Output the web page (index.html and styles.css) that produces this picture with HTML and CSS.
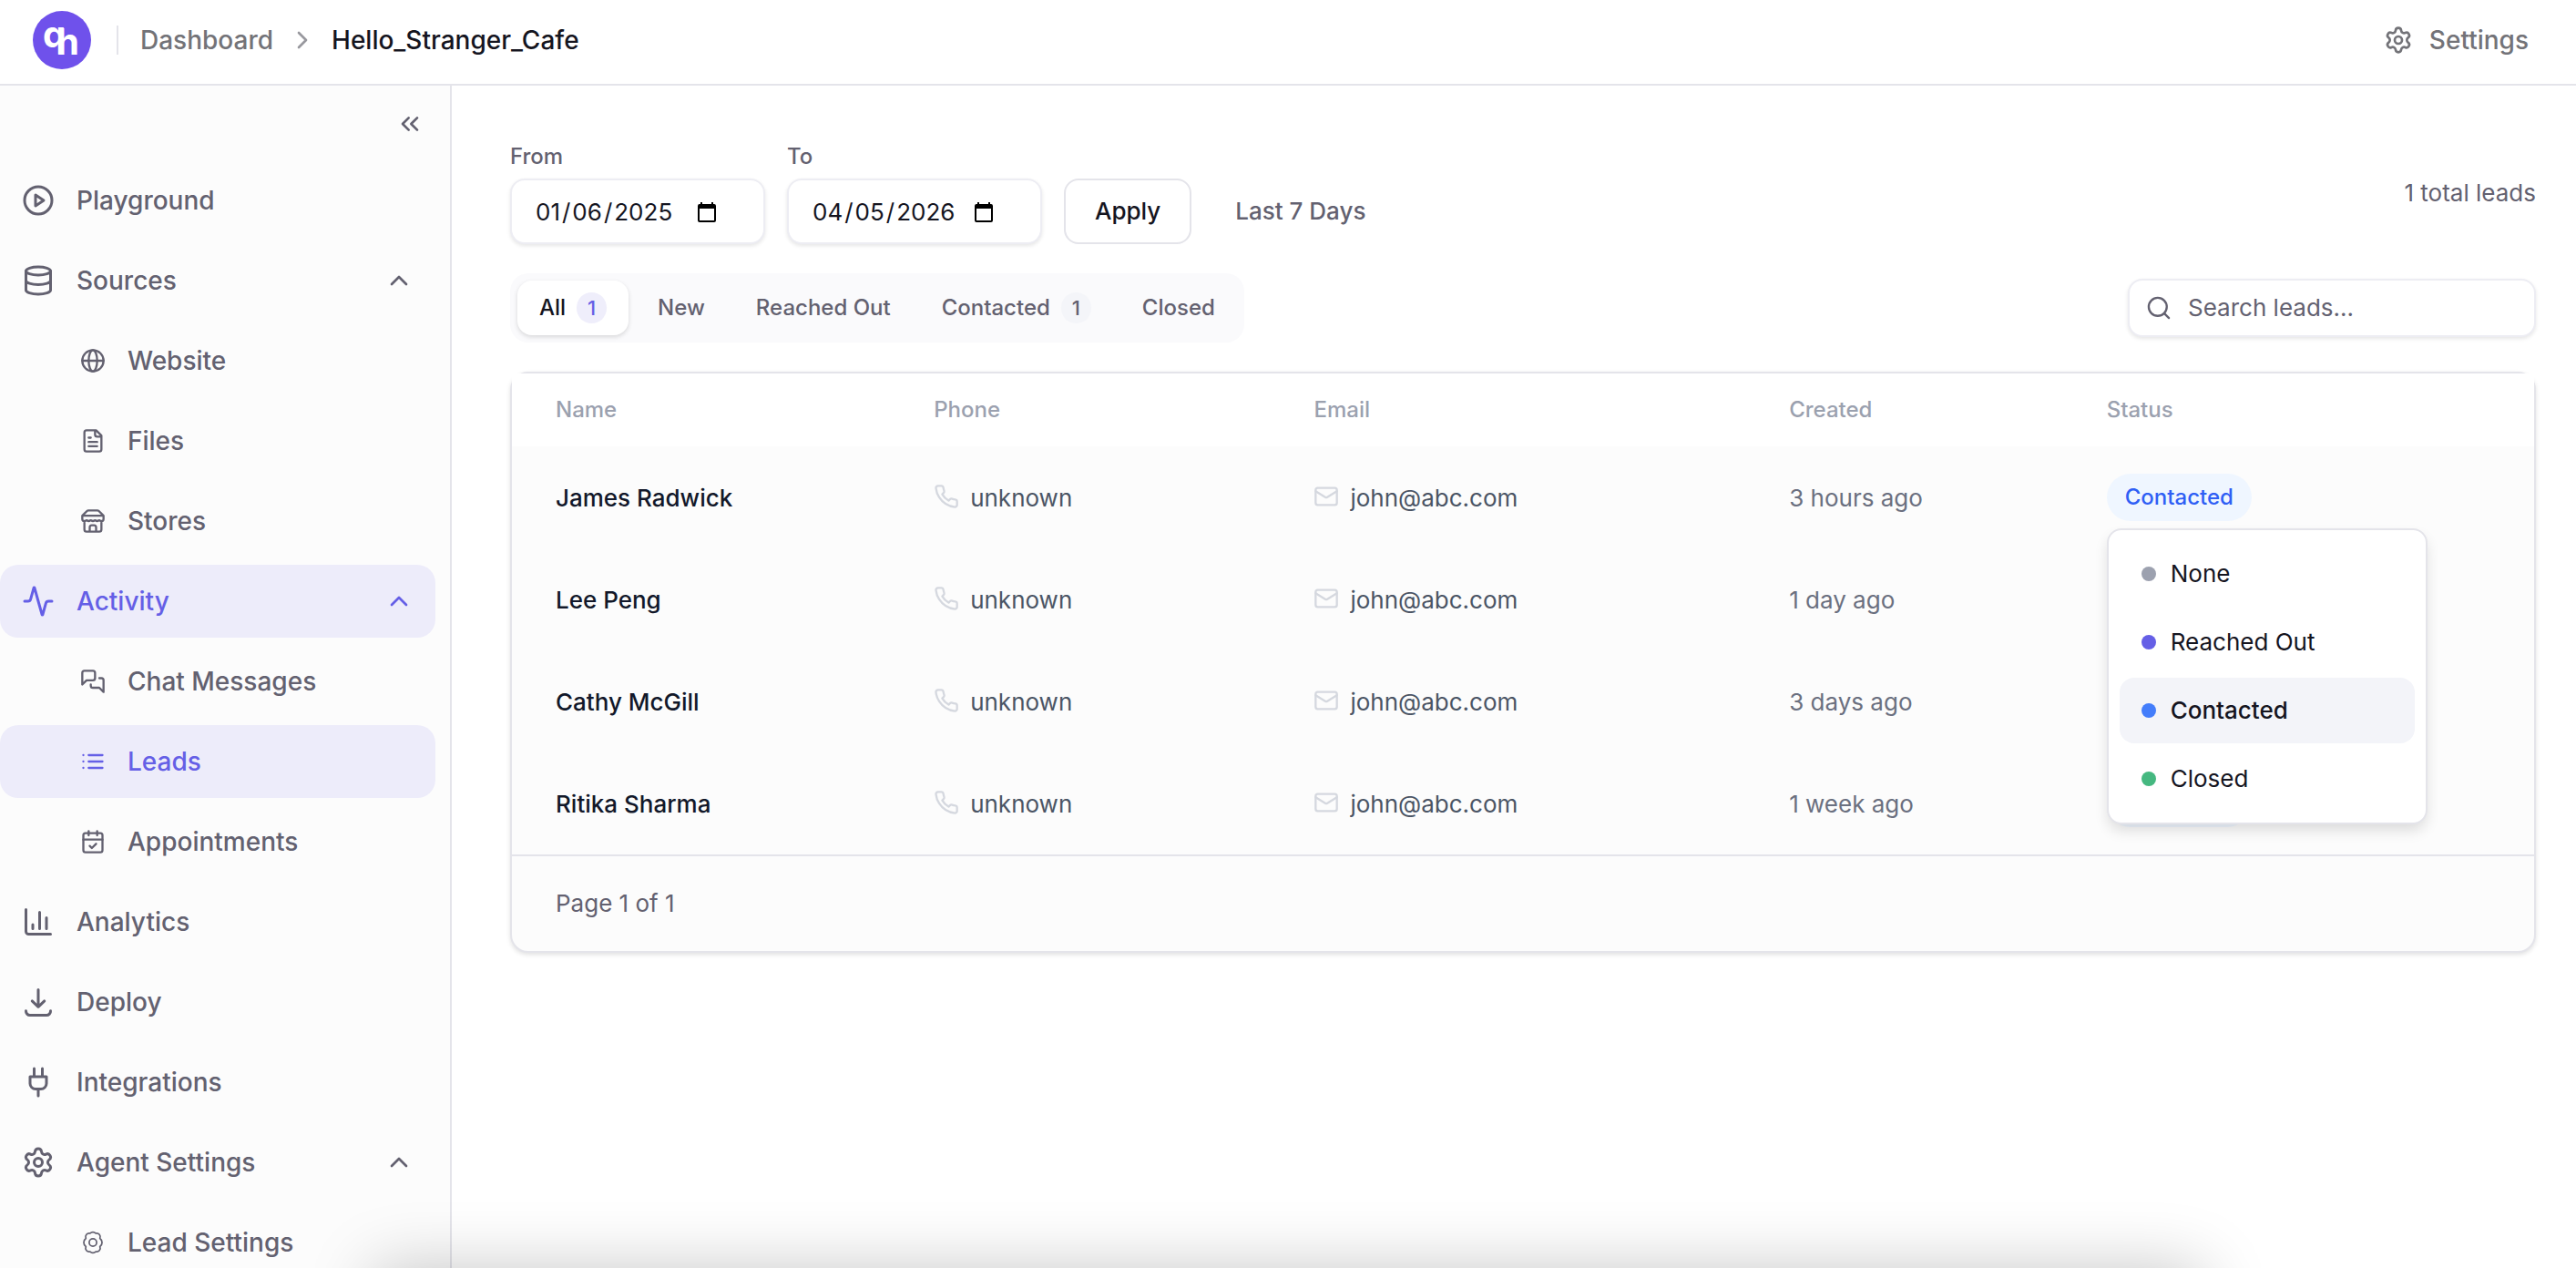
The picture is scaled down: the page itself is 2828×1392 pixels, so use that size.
FILE: index.html
```html
<!DOCTYPE html>
<html lang="en-US">
<head>
<meta charset="utf-8">
<meta name="viewport" content="width=device-width, initial-scale=1">
<title>Leads</title>
<link rel="stylesheet" href="styles.css">
</head>
<body>
<svg class="sprite" aria-hidden="true">
  <symbol id="i-play" viewBox="0 0 24 24"><circle cx="12" cy="12" r="10"/><path d="M10 8l6 4-6 4z"/></symbol>
  <symbol id="i-database" viewBox="0 0 24 24"><ellipse cx="12" cy="5" rx="9" ry="3"/><path d="M3 5v14a9 3 0 0 0 18 0V5M3 12a9 3 0 0 0 18 0"/></symbol>
  <symbol id="i-globe" viewBox="0 0 24 24"><circle cx="12" cy="12" r="10"/><path d="M2 12h20"/><ellipse cx="12" cy="12" rx="4" ry="10"/></symbol>
  <symbol id="i-file" viewBox="0 0 24 24"><path d="M15 2H6a2 2 0 0 0-2 2v16a2 2 0 0 0 2 2h12a2 2 0 0 0 2-2V7zM14 2v4a2 2 0 0 0 2 2h4M10 9H8M16 13H8M16 17H8"/></symbol>
  <symbol id="i-store" viewBox="0 0 24 24"><path d="M2 7l4.400-4.400A2 2 0 0 1 7.800 2h8.400a2 2 0 0 1 1.400.6L22 7v3a2 2 0 0 1-2 2 2.700 2.700 0 0 1-1.600-.6.7.7 0 0 0-.8 0 2.700 2.700 0 0 1-3.200 0 .7.7 0 0 0-.8 0 2.700 2.700 0 0 1-3.200 0 .7.7 0 0 0-.8 0 2.700 2.700 0 0 1-3.200 0 .7.7 0 0 0-.8 0A2.700 2.700 0 0 1 4 12a2 2 0 0 1-2-2zM2 7h20M4 12v8a2 2 0 0 0 2 2h12a2 2 0 0 0 2-2v-8M15 22v-4a2 2 0 0 0-2-2h-2a2 2 0 0 0-2 2v4"/></symbol>
  <symbol id="i-activity" viewBox="0 0 24 24"><path d="M22 12h-2.480a2 2 0 0 0-1.930 1.460l-2.350 8.360a.25.25 0 0 1-.48 0L9.240 2.180a.25.25 0 0 0-.48 0l-2.350 8.360A2 2 0 0 1 4.490 12H2"/></symbol>
  <symbol id="i-chat" viewBox="0 0 24 24"><path d="M14 9a2 2 0 0 1-2 2H6l-4 4V4a2 2 0 0 1 2-2h8a2 2 0 0 1 2 2zM18 9h2a2 2 0 0 1 2 2v11l-4-4h-6a2 2 0 0 1-2-2v-1"/></symbol>
  <symbol id="i-list" viewBox="0 0 24 24"><path d="M8 6h13M8 12h13M8 18h13M3 6h.01M3 12h.01M3 18h.01"/></symbol>
  <symbol id="i-calendar" viewBox="0 0 24 24"><rect x="3" y="4" width="18" height="18" rx="2"/><path d="M8 2v4M16 2v4M3 10h18M9 16l2 2 4-4"/></symbol>
  <symbol id="i-chart" viewBox="0 0 24 24"><path d="M3 3v16a2 2 0 0 0 2 2h16M18 17V9M13 17V5M8 17v-3"/></symbol>
  <symbol id="i-download" viewBox="0 0 24 24"><path d="M12 3v12.500M7.500 11.300l4.500 4.300 4.500-4.300M3 18.500a3 3 0 0 0 3 3.200h12a3 3 0 0 0 3-3.200"/></symbol>
  <symbol id="i-plug" viewBox="0 0 24 24"><path d="M12 22v-5M9 8V2M15 8V2M18 8v5a4 4 0 0 1-4 4h-4a4 4 0 0 1-4-4V8z"/></symbol>
  <symbol id="i-gear" viewBox="0 0 24 24"><path d="M9.671 4.136a2.340 2.340 0 0 1 4.659 0 2.340 2.340 0 0 0 3.319 1.915 2.340 2.340 0 0 1 2.330 4.033 2.340 2.340 0 0 0 0 3.831 2.340 2.340 0 0 1-2.330 4.033 2.340 2.340 0 0 0-3.319 1.915 2.340 2.340 0 0 1-4.659 0 2.340 2.340 0 0 0-3.320-1.915 2.340 2.340 0 0 1-2.330-4.033 2.340 2.340 0 0 0 0-3.831A2.340 2.340 0 0 1 6.350 6.051a2.340 2.340 0 0 0 3.319-1.915"/><circle cx="12" cy="12" r="3"/></symbol>
  <symbol id="i-cog" viewBox="0 0 24 24"><path d="M9.300 3.400a3.600 3.600 0 0 1 5.400 0a3.400 3.400 0 0 1 3.900 4.700a4.800 4.800 0 0 1 0 7.800a3.400 3.400 0 0 1-3.900 4.700a3.600 3.600 0 0 1-5.400 0a3.400 3.400 0 0 1-3.900-4.700a4.800 4.800 0 0 1 0-7.800a3.400 3.400 0 0 1 3.900-4.700z"/><circle cx="12" cy="12" r="3.500"/></symbol>
  <symbol id="i-up" viewBox="0 0 24 24"><path d="M18 15l-6-6-6 6"/></symbol>
  <symbol id="i-right" viewBox="0 0 24 24"><path d="M9 18l6-6-6-6"/></symbol>
  <symbol id="i-collapse" viewBox="0 0 24 24"><path d="M11 17l-5-5 5-5M18 17l-5-5 5-5"/></symbol>
  <symbol id="i-search" viewBox="0 0 24 24"><circle cx="11" cy="11" r="8.500"/><path d="M21.500 21.500l-4.300-4.300"/></symbol>
  <symbol id="i-phone" viewBox="0 0 24 24"><path d="M22 16.920v3a2 2 0 0 1-2.180 2 19.790 19.790 0 0 1-8.630-3.070 19.500 19.500 0 0 1-6-6 19.790 19.790 0 0 1-3.070-8.670A2 2 0 0 1 4.110 2h3a2 2 0 0 1 2 1.720 12.840 12.840 0 0 0 .7 2.810 2 2 0 0 1-.45 2.110L8.090 9.910a16 16 0 0 0 6 6l1.270-1.270a2 2 0 0 1 2.110-.45 12.840 12.840 0 0 0 2.810.7A2 2 0 0 1 22 16.920z"/></symbol>
  <symbol id="i-mail" viewBox="0 0 24 24"><rect x="2" y="4" width="20" height="16" rx="2"/><path d="M22 7l-8.970 5.700a1.940 1.940 0 0 1-2.060 0L2 7"/></symbol>
</svg>

<header class="topbar">
  <a class="logo" href="#" aria-label="Home">
    <svg viewBox="0 0 64 64"><circle cx="32" cy="32" r="32"/><text x="11" y="40">q</text><text x="26" y="48">h</text></svg>
  </a>
  <span class="topbar-divider"></span>
  <nav class="crumbs" aria-label="Breadcrumb">
    <a href="#">Dashboard</a>
    <svg class="icon icon-md"><use href="#i-right"/></svg>
    <a class="current" href="#">Hello_Stranger_Cafe</a>
  </nav>
  <a class="topbar-settings" href="#"><svg class="icon icon-md"><use href="#i-gear"/></svg>Settings</a>
</header>

<div class="shell">
  <aside class="sidebar">
    <button class="collapse" type="button" aria-label="Collapse sidebar"><svg class="icon icon-md"><use href="#i-collapse"/></svg></button>
    <nav class="menu" aria-label="Main">
      <a class="item" href="#"><svg class="icon icon-lg"><use href="#i-play"/></svg>Playground</a>
      <a class="item" href="#"><svg class="icon icon-lg"><use href="#i-database"/></svg>Sources<svg class="icon icon-md caret"><use href="#i-up"/></svg></a>
      <a class="item sub" href="#"><svg class="icon icon-sm"><use href="#i-globe"/></svg>Website</a>
      <a class="item sub" href="#"><svg class="icon icon-sm"><use href="#i-file"/></svg>Files</a>
      <a class="item sub" href="#"><svg class="icon icon-sm"><use href="#i-store"/></svg>Stores</a>
      <a class="item active" href="#"><svg class="icon icon-lg"><use href="#i-activity"/></svg>Activity<svg class="icon icon-md caret"><use href="#i-up"/></svg></a>
      <a class="item sub" href="#"><svg class="icon icon-sm"><use href="#i-chat"/></svg>Chat Messages</a>
      <a class="item sub active" href="#" aria-current="page"><svg class="icon icon-sm"><use href="#i-list"/></svg>Leads</a>
      <a class="item sub" href="#"><svg class="icon icon-sm"><use href="#i-calendar"/></svg>Appointments</a>
      <a class="item" href="#"><svg class="icon icon-lg"><use href="#i-chart"/></svg>Analytics</a>
      <a class="item" href="#"><svg class="icon icon-lg"><use href="#i-download"/></svg>Deploy</a>
      <a class="item" href="#"><svg class="icon icon-lg"><use href="#i-plug"/></svg>Integrations</a>
      <a class="item" href="#"><svg class="icon icon-lg"><use href="#i-gear"/></svg>Agent Settings<svg class="icon icon-md caret"><use href="#i-up"/></svg></a>
      <a class="item sub" href="#"><svg class="icon icon-sm thin"><use href="#i-cog"/></svg>Lead Settings</a>
    </nav>
  </aside>

  <main class="content">
    <div class="row">
      <form class="range">
        <div class="field"><label for="from">From</label><input class="date" id="from" type="date" value="2025-01-06"></div>
        <div class="field"><label for="to">To</label><input class="date" id="to" type="date" value="2026-04-05"></div>
        <button class="apply" type="button">Apply</button>
        <button class="preset" type="button">Last 7 Days</button>
      </form>
      <p class="total">1 total leads</p>
    </div>

    <div class="row">
      <div class="tabs">
        <button class="tab selected" type="button">All<span class="count">1</span></button>
        <button class="tab" type="button">New</button>
        <button class="tab" type="button">Reached Out</button>
        <button class="tab" type="button">Contacted<span class="count">1</span></button>
        <button class="tab" type="button">Closed</button>
      </div>
      <label class="search"><svg class="icon icon-sm"><use href="#i-search"/></svg><input type="search" placeholder="Search leads..." aria-label="Search leads"></label>
    </div>

    <section class="card">
      <table class="leads">
        <colgroup><col class="c-name"><col class="c-phone"><col class="c-email"><col class="c-created"><col></colgroup>
        <thead><tr><th>Name</th><th>Phone</th><th>Email</th><th>Created</th><th>Status</th></tr></thead>
        <tbody>
          <tr>
            <td class="name">James Radwick</td>
            <td><span class="contact"><svg class="icon icon-sm"><use href="#i-phone"/></svg>unknown</span></td>
            <td><span class="contact"><svg class="icon icon-sm"><use href="#i-mail"/></svg>john@abc.com</span></td>
            <td class="created">3 hours ago</td>
            <td class="state"><div class="status">
              <button class="badge" type="button" aria-expanded="true">Contacted</button>
              <div class="dropdown">
                <button class="option" type="button"><span class="dot gray"></span>None</button>
                <button class="option" type="button"><span class="dot violet"></span>Reached Out</button>
                <button class="option chosen" type="button"><span class="dot blue"></span>Contacted</button>
                <button class="option" type="button"><span class="dot green"></span>Closed</button>
              </div>
            </div></td>
          </tr>
          <tr>
            <td class="name">Lee Peng</td>
            <td><span class="contact"><svg class="icon icon-sm"><use href="#i-phone"/></svg>unknown</span></td>
            <td><span class="contact"><svg class="icon icon-sm"><use href="#i-mail"/></svg>john@abc.com</span></td>
            <td class="created">1 day ago</td>
            <td class="state"><button class="badge" type="button" aria-label="Change status"></button></td>
          </tr>
          <tr>
            <td class="name">Cathy McGill</td>
            <td><span class="contact"><svg class="icon icon-sm"><use href="#i-phone"/></svg>unknown</span></td>
            <td><span class="contact"><svg class="icon icon-sm"><use href="#i-mail"/></svg>john@abc.com</span></td>
            <td class="created">3 days ago</td>
            <td class="state"><button class="badge" type="button" aria-label="Change status"></button></td>
          </tr>
          <tr>
            <td class="name">Ritika Sharma</td>
            <td><span class="contact"><svg class="icon icon-sm"><use href="#i-phone"/></svg>unknown</span></td>
            <td><span class="contact"><svg class="icon icon-sm"><use href="#i-mail"/></svg>john@abc.com</span></td>
            <td class="created">1 week ago</td>
            <td class="state"><button class="badge" type="button" aria-label="Change status"></button></td>
          </tr>
        </tbody>
      </table>
      <footer class="pager">Page 1 of 1</footer>
    </section>
  </main>
</div>
<div class="dock-shadow"></div>
</body>
</html>
```

FILE: styles.css
```css
:root {
  --text: #15151f;
  --muted: #636170;
  --line: #e4e4ea;
  --soft-line: #ededf3;
  --accent: #655fe6;
  --accent-soft: #edecfa;
}

* { box-sizing: border-box; }

body {
  margin: 0;
  height: 100vh;
  display: flex;
  flex-direction: column;
  overflow: hidden;
  background: #fff;
  color: var(--text);
  font: 400 26px/36px Inter, "Noto Sans", sans-serif;
}

a { color: inherit; text-decoration: none; }
p { margin: 0; }
button { font: inherit; color: inherit; background: none; border: 0; padding: 0; }
.sprite { display: none; }

.icon {
  flex: none;
  fill: none;
  stroke: currentColor;
  stroke-width: 2;
  stroke-linecap: round;
  stroke-linejoin: round;
}
.icon-sm { width: 28px; height: 28px; }
.icon-md { width: 32px; height: 32px; }
.icon-lg { width: 36px; height: 36px; }
.thin { stroke-width: 1.5; }

/* Top bar */
.topbar {
  flex: none;
  display: flex;
  align-items: center;
  padding: 12px 52px 16px 36px;
  border-bottom: 2px solid var(--line);
  font-size: 28px;
  font-weight: 500;
  color: #737378;
}
.logo svg { display: block; width: 64px; height: 64px; }
.logo circle { fill: #6f51eb; }
.logo text { fill: #fff; font-size: 40px; font-weight: 700; }
.topbar-divider { width: 2px; height: 32px; margin: 0 24px 0 28px; background: var(--line); }
.crumbs { display: flex; align-items: center; gap: 16px; }
.crumbs .icon { color: #98989e; }
.crumbs .current { color: var(--text); }
.topbar-settings { display: flex; align-items: center; gap: 18px; margin-left: auto; }

/* Sidebar */
.shell { flex: 1; min-height: 0; display: flex; }
.sidebar {
  flex: none;
  width: 496px;
  padding: 26px 16px 0 0;
  overflow: hidden;
  background: #fcfcfc;
  border-right: 2px solid var(--line);
  color: var(--muted);
  font-size: 28px;
  font-weight: 500;
}
.collapse { display: block; margin: 0 12px 28px auto; }
.collapse .icon { display: block; }
.menu { display: flex; flex-direction: column; gap: 8px; }
.item {
  display: flex;
  align-items: center;
  gap: 24px;
  height: 80px;
  padding: 0 24px;
  border-radius: 20px;
}
.item.sub { padding-left: 88px; }
.item.active { background: var(--accent-soft); color: var(--accent); }
.caret { margin-left: auto; }

/* Content */
.content {
  flex: 1;
  min-width: 0;
  display: flex;
  flex-direction: column;
  gap: 32px;
  padding: 62px 44px 0 64px;
}
.row { display: flex; align-items: center; justify-content: space-between; }
.range { display: flex; align-items: flex-end; gap: 24px; }
.field { display: flex; flex-direction: column; gap: 8px; }
.field label { font-size: 24px; line-height: 32px; font-weight: 500; color: var(--muted); }
.date, .search {
  background: #fff;
  border: 2px solid var(--soft-line);
  border-radius: 16px;
  box-shadow: 0 2px 4px rgba(0, 0, 0, .1);
}
.date {
  width: 280px;
  height: 72px;
  padding: 2px 50px 0 24px;
  font: inherit;
  color: var(--text);
}
.date::-webkit-datetime-edit-month-field,
.date::-webkit-datetime-edit-day-field,
.date::-webkit-datetime-edit-year-field { padding: 0 2px; }
.date::-webkit-calendar-picker-indicator {
  width: 24px;
  height: 24px;
  margin: 0;
  padding: 0;
  background: url("data:image/svg+xml,%3Csvg xmlns='http://www.w3.org/2000/svg' viewBox='0 0 24 24'%3E%3Cpath d='M20 3h-1V1h-2v2H7V1H5v2H4a2 2 0 0 0-2 2v16a2 2 0 0 0 2 2h16a2 2 0 0 0 2-2V5a2 2 0 0 0-2-2zm0 18H4V8h16z'/%3E%3C/svg%3E") center / 24px 24px no-repeat;
}
.apply {
  height: 72px;
  padding: 0 32px;
  border: 2px solid var(--line);
  border-radius: 16px;
  font-weight: 500;
}
.preset { height: 72px; padding: 0 24px; font-weight: 500; color: var(--muted); }
.total { color: var(--muted); }

.tabs {
  display: flex;
  gap: 8px;
  padding: 8px;
  border-radius: 20px;
  background: #fafafc;
  font-size: 24px;
  font-weight: 500;
  color: var(--muted);
}
.tab { display: flex; align-items: center; gap: 12px; height: 60px; padding: 0 24px; border-radius: 16px; }
.tab.selected { background: #fff; color: var(--text); box-shadow: 0 2px 5px rgba(0, 0, 0, .14); }
.count {
  width: 33px;
  border-radius: 17px;
  background: #f4f5f9;
  font-size: 22px;
  line-height: 34px;
  text-align: center;
}
.selected .count { background: #efeefb; color: var(--accent); }

.search {
  display: flex;
  align-items: center;
  gap: 18px;
  width: 448px;
  height: 64px;
  padding: 0 18px;
  color: var(--muted);
}
.search input { flex: 1; min-width: 0; padding: 0; border: 0; outline: 0; background: none; font: inherit; color: var(--text); }
.search input::placeholder { color: var(--muted); opacity: 1; }

/* Leads table */
.card {
  border: 2px solid var(--line);
  border-radius: 20px;
  background: #fcfcfc;
  box-shadow: 0 2px 5px rgba(0, 0, 0, .12);
}
.leads { width: 100%; table-layout: fixed; border-collapse: collapse; }
.c-name { width: 18.7%; }
.c-phone { width: 18.8%; }
.c-email { width: 23.5%; }
.c-created { width: 15.7%; }
.leads th {
  height: 80px;
  padding: 0 0 0 48px;
  background: #fff;
  text-align: left;
  font-size: 24px;
  font-weight: 500;
  color: #9ba1af;
}
.leads td { height: 112px; padding: 2px 0 0 48px; color: #4b5565; }
.leads .state { padding-top: 0; }
.leads .name { font-weight: 500; color: #12182a; }
.leads .created { color: #6b7080; }
.contact { display: flex; align-items: center; gap: 12px; }
.contact .icon { margin-bottom: 4px; color: #d5d8df; }
.status { position: relative; }
.badge {
  display: block;
  min-width: 158px;
  height: 52px;
  padding: 0 20px;
  border-radius: 26px;
  background: #eff6ff;
  font-size: 24px;
  font-weight: 500;
  color: #2f5ff5;
}
.dropdown {
  position: absolute;
  z-index: 2;
  top: 60px;
  left: 0;
  display: flex;
  flex-direction: column;
  gap: 3px;
  width: 352px;
  padding: 12px;
  border: 2px solid var(--line);
  border-radius: 16px;
  background: #fff;
  box-shadow: 0 8px 16px -2px rgba(0, 0, 0, .14);
}
.option {
  display: flex;
  align-items: center;
  gap: 16px;
  height: 72px;
  padding: 0 24px;
  border-radius: 16px;
  color: var(--text);
}
.option.chosen { background: #f3f4f9; font-weight: 500; }
.dot { width: 16px; height: 16px; border-radius: 50%; }
.gray { background: #9ca1af; }
.violet { background: #655fe6; }
.blue { background: #437dfb; }
.green { background: #45b880; }
.pager { padding: 34px 48px; border-top: 2px solid var(--line); color: var(--muted); }

/* Soft shade rising from below the fold */
.dock-shadow {
  position: fixed;
  top: 100%;
  left: 14.5%;
  right: 14.5%;
  height: 200px;
  box-shadow: 0 0 72px rgba(0, 0, 0, .22);
  pointer-events: none;
}
```
